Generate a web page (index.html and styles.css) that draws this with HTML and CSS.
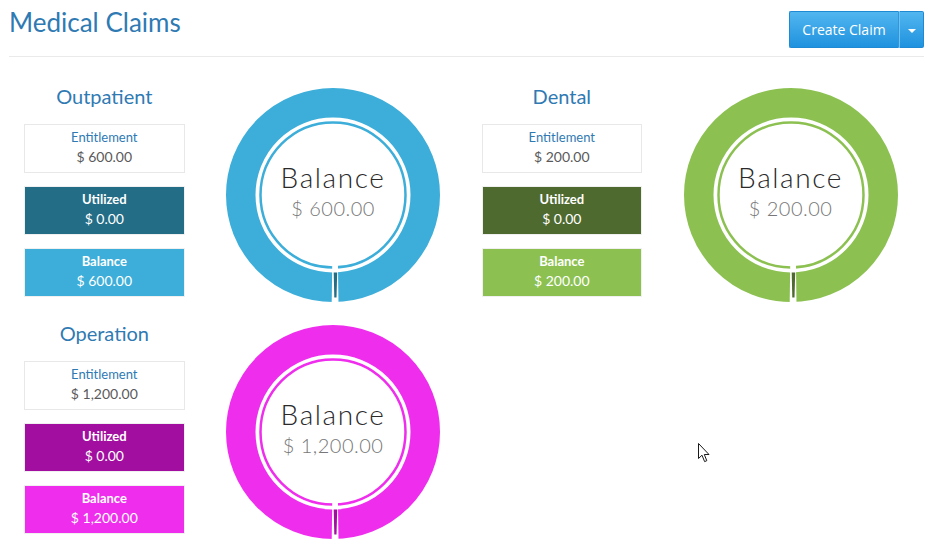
FILE: index.html
```html
<!DOCTYPE html>
<html lang="en">
<head>
<meta charset="utf-8">
<title>Medical Claims</title>
<link rel="stylesheet" href="styles.css">
</head>
<body>
<div class="page">
  <header class="page-header">
    <h1 class="title">Medical Claims</h1>
    <div class="btn-group">
      <button class="btn btn-main" type="button">Create Claim</button>
      <button class="btn btn-caret" type="button"><span class="caret"></span></button>
    </div>
  </header>

  <div class="claims">
    <section class="claim">
      <div class="stats">
        <h2 class="claim-title">Outpatient</h2>
        <div class="stat stat-ent"><div class="lbl">Entitlement</div><div class="val">$ 600.00</div></div>
        <div class="stat stat-used blue-dark"><div class="lbl">Utilized</div><div class="val">$ 0.00</div></div>
        <div class="stat stat-bal blue"><div class="lbl">Balance</div><div class="val">$ 600.00</div></div>
      </div>
      <div class="chart">
        <div class="donut">
          <svg width="216" height="216" viewBox="-108 -108 216 216">
            <circle r="92.25" fill="none" stroke="#3caed9" stroke-width="29.5"/>
            <circle r="72.5" fill="none" stroke="#3caed9" stroke-width="2.5"/>
            <polygon points="-0.7,66 -1.3,108 5.5,108 4.9,66" fill="#fff"/>
            <polygon points="0.7,77.5 4.2,77.5 3.5,102.5 1.3,102.5" fill="#236d87"/>
          </svg>
          <div class="donut-label"><div class="donut-title">Balance</div><div class="donut-value">$ 600.00</div></div>
        </div>
      </div>
    </section>

    <section class="claim">
      <div class="stats">
        <h2 class="claim-title">Dental</h2>
        <div class="stat stat-ent"><div class="lbl">Entitlement</div><div class="val">$ 200.00</div></div>
        <div class="stat stat-used green-dark"><div class="lbl">Utilized</div><div class="val">$ 0.00</div></div>
        <div class="stat stat-bal green"><div class="lbl">Balance</div><div class="val">$ 200.00</div></div>
      </div>
      <div class="chart">
        <div class="donut">
          <svg width="216" height="216" viewBox="-108 -108 216 216">
            <circle r="92.25" fill="none" stroke="#8cc152" stroke-width="29.5"/>
            <circle r="72.5" fill="none" stroke="#8cc152" stroke-width="2.5"/>
            <polygon points="-0.7,66 -1.3,108 5.5,108 4.9,66" fill="#fff"/>
            <polygon points="0.7,77.5 4.2,77.5 3.5,102.5 1.3,102.5" fill="#4f6a2f"/>
          </svg>
          <div class="donut-label"><div class="donut-title">Balance</div><div class="donut-value">$ 200.00</div></div>
        </div>
      </div>
    </section>

    <section class="claim">
      <div class="stats">
        <h2 class="claim-title">Operation</h2>
        <div class="stat stat-ent"><div class="lbl">Entitlement</div><div class="val">$ 1,200.00</div></div>
        <div class="stat stat-used magenta-dark"><div class="lbl">Utilized</div><div class="val">$ 0.00</div></div>
        <div class="stat stat-bal magenta"><div class="lbl">Balance</div><div class="val">$ 1,200.00</div></div>
      </div>
      <div class="chart">
        <div class="donut">
          <svg width="216" height="216" viewBox="-108 -108 216 216">
            <circle r="92.25" fill="none" stroke="#ef2ded" stroke-width="29.5"/>
            <circle r="72.5" fill="none" stroke="#ef2ded" stroke-width="2.5"/>
            <polygon points="-0.7,66 -1.3,108 5.5,108 4.9,66" fill="#fff"/>
            <polygon points="0.7,77.5 4.2,77.5 3.5,102.5 1.3,102.5" fill="#a20ea0"/>
          </svg>
          <div class="donut-label"><div class="donut-title">Balance</div><div class="donut-value">$ 1,200.00</div></div>
        </div>
      </div>
    </section>
  </div>
</div>

<svg class="cursor" width="13" height="20" viewBox="0 0 13 20">
  <path d="M0.5,0.5 L0.5,15.5 L4,12.2 L6.6,18.6 L8.8,17.7 L6.3,11.5 L11,11.5 Z" fill="#fff" stroke="#1a1a1a" stroke-width="1" stroke-linejoin="round"/>
</svg>
</body>
</html>
```

FILE: styles.css
```css
* {
  box-sizing: border-box;
}

body {
  margin: 0;
  background: #fff;
  font-family: "Lato", "Open Sans", sans-serif;
  color: #555;
}

.page {
  padding: 0 10px 0 9px;
}

.page-header {
  display: flex;
  justify-content: space-between;
  align-items: flex-start;
  height: 57px;
  padding-top: 7px;
  border-bottom: 1px solid #eaeaea;
}

.title {
  margin: 0;
  font-size: 26px;
  line-height: 30px;
  font-weight: 400;
  color: #2f7ab3;
}

.btn-group {
  display: flex;
  margin-top: 4px;
}

.btn {
  height: 37px;
  border: 1px solid #1f8ad3;
  background: linear-gradient(#52b6ef, #1f92df);
  color: #fff;
  font-family: "Open Sans", sans-serif;
  font-size: 14px;
  margin: 0;
  cursor: pointer;
}

.btn-main {
  width: 110px;
  padding: 0;
  border-radius: 2px 0 0 2px;
  border-right-color: #2e98de;
}

.btn-caret {
  width: 25px;
  padding: 0;
  border-left: 1px solid #6fc2f1;
  border-radius: 0 2px 2px 0;
  display: flex;
  align-items: center;
  justify-content: center;
}

.caret {
  width: 0;
  height: 0;
  border-left: 4px solid transparent;
  border-right: 4px solid transparent;
  border-top: 4px solid #fff;
  margin-top: 2px;
}

.claims {
  display: grid;
  grid-template-columns: 1fr 1fr;
  row-gap: 18px;
  padding-top: 27px;
}

.claim {
  display: grid;
  grid-template-columns: 5fr 7fr;
}

.stats {
  padding: 0 15px;
}

.claim-title {
  margin: 0 0 16px;
  font-size: 20px;
  line-height: 24px;
  font-weight: 400;
  text-align: center;
  color: #2f7ab3;
}

.stat {
  height: 49px;
  border: 1px solid #e8e8e8;
  padding-top: 4px;
  margin-bottom: 13px;
  text-align: center;
}

.stat:last-child {
  margin-bottom: 0;
}

.lbl {
  font-size: 13px;
  line-height: 16px;
}

.val {
  margin-top: 2px;
  font-size: 14px;
  line-height: 20px;
}

.stat-ent .lbl {
  color: #2f7ab3;
}

.stat-ent .val {
  color: #5a5a5a;
}

.stat-used,
.stat-bal {
  color: #fff;
  border-color: #f0f0f0;
}

.stat-used .lbl,
.stat-bal .lbl {
  font-weight: 700;
}

.blue-dark { background: #236d87; }
.blue { background: #3caed9; }
.green-dark { background: #4f6a2f; }
.green { background: #8cc152; }
.magenta-dark { background: #a20ea0; }
.magenta { background: #ef2ded; }

.chart {
  display: flex;
  justify-content: center;
  align-items: flex-start;
  padding-top: 3px;
}

.donut {
  position: relative;
  width: 216px;
  height: 216px;
}

.donut svg {
  display: block;
}

.donut-label {
  position: absolute;
  inset: 0;
  display: flex;
  flex-direction: column;
  align-items: center;
  padding-top: 75px;
}

.donut-title {
  font-size: 28px;
  line-height: 30px;
  font-weight: 300;
  letter-spacing: 1.6px;
  color: #2a2a2a;
}

.donut-value {
  margin-top: 4px;
  font-size: 20px;
  line-height: 24px;
  font-weight: 300;
  letter-spacing: 0.5px;
  color: #777;
}

.cursor {
  position: absolute;
  left: 698px;
  top: 443px;
}
```
